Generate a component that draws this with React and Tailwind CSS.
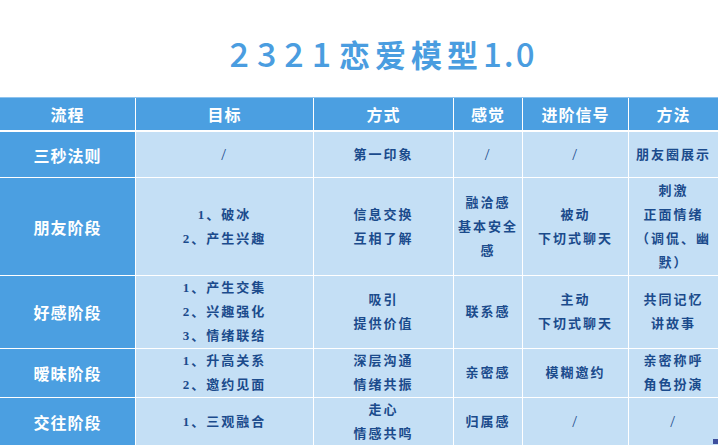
import React from 'react';

const headers = ['流程', '目标', '方式', '感觉', '进阶信号', '方法'];

// each cell is a list of lines
const rows = [
  {
    stage: '三秒法则',
    h: 'h-[45px]',
    cells: [['/'], ['第一印象'], ['/'], ['/'], ['朋友圈展示']],
  },
  {
    stage: '朋友阶段',
    h: 'h-[97px]',
    cells: [
      ['1、破冰', '2、产生兴趣'],
      ['信息交换', '互相了解'],
      ['融洽感', '基本安全', '感'],
      ['被动', '下切式聊天'],
      ['刺激', '正面情绪', '（调侃、幽', '默）'],
    ],
  },
  {
    stage: '好感阶段',
    h: 'h-[72px]',
    cells: [
      ['1、产生交集', '2、兴趣强化', '3、情绪联结'],
      ['吸引', '提供价值'],
      ['联系感'],
      ['主动', '下切式聊天'],
      ['共同记忆', '讲故事'],
    ],
  },
  {
    stage: '暧昧阶段',
    h: 'h-[48px]',
    cells: [
      ['1、升高关系', '2、邀约见面'],
      ['深层沟通', '情绪共振'],
      ['亲密感'],
      ['模糊邀约'],
      ['亲密称呼', '角色扮演'],
    ],
  },
  {
    stage: '交往阶段',
    h: 'h-[48px]',
    cells: [['1、三观融合'], ['走心', '情感共鸣'], ['归属感'], ['/'], ['/']],
  },
];

const cols = 'grid grid-cols-[135px_177px_139px_68px_105px_89px] gap-px';
const sans = "font-['Noto_Sans_CJK_SC','Noto_Sans',sans-serif]";

const App = () => {
  return (
    <div className="w-[720px] h-[445px] overflow-hidden bg-white">
      {/* Title */}
      <div className="h-[97px] flex items-center justify-center pl-[46px] pt-[8px]">
        <h1 className={`${sans} text-[31px] font-semibold text-[#4a9de0] leading-none flex items-baseline`}>
          <span className="text-[34px] font-medium tracking-[8px]">2321</span>
          <span className="tracking-[5px]">恋爱模型</span>
          <span className="text-[33px] font-medium tracking-[2px]">1.0</span>
        </h1>
      </div>

      {/* Table */}
      <div className="w-[718px] bg-white">
        <div className={`${cols} border-t border-[#8ec3ee] mb-[2px]`}>
          {headers.map((t) => (
            <div
              key={t}
              className={`${sans} h-[32px] bg-[#4b9fe1] flex items-center justify-center text-white text-[16px] font-bold tracking-[1px]`}
            >
              {t}
            </div>
          ))}
        </div>

        <div className={`${cols} relative`}>
          {rows.map((row) => (
            <React.Fragment key={row.stage}>
              <div
                className={`${sans} ${row.h} bg-[#4b9fe1] flex items-center justify-center text-white text-[16px] font-bold tracking-[1px]`}
              >
                {row.stage}
              </div>
              {row.cells.map((lines, i) => (
                <div
                  key={i}
                  className={`${row.h} bg-[#c4dff5] flex flex-col items-center justify-center text-[#1b4b8c] text-[13px] leading-[24px] font-semibold tracking-[2px] font-['Liberation_Serif','Noto_Sans_CJK_SC',serif]`}
                >
                  {lines.map((l) =>
                    l === '/' ? (
                      <div key={l} className="text-[17px] font-normal">/</div>
                    ) : (
                      <div key={l} className="whitespace-nowrap">{l}</div>
                    )
                  )}
                </div>
              ))}
            </React.Fragment>
          ))}
          {/* resize handle mark */}
          <div className="absolute right-0 bottom-[2px] w-[5px] h-[5px] bg-[#3d4f9e]" />
        </div>
      </div>
    </div>
  );
};

export default App;
